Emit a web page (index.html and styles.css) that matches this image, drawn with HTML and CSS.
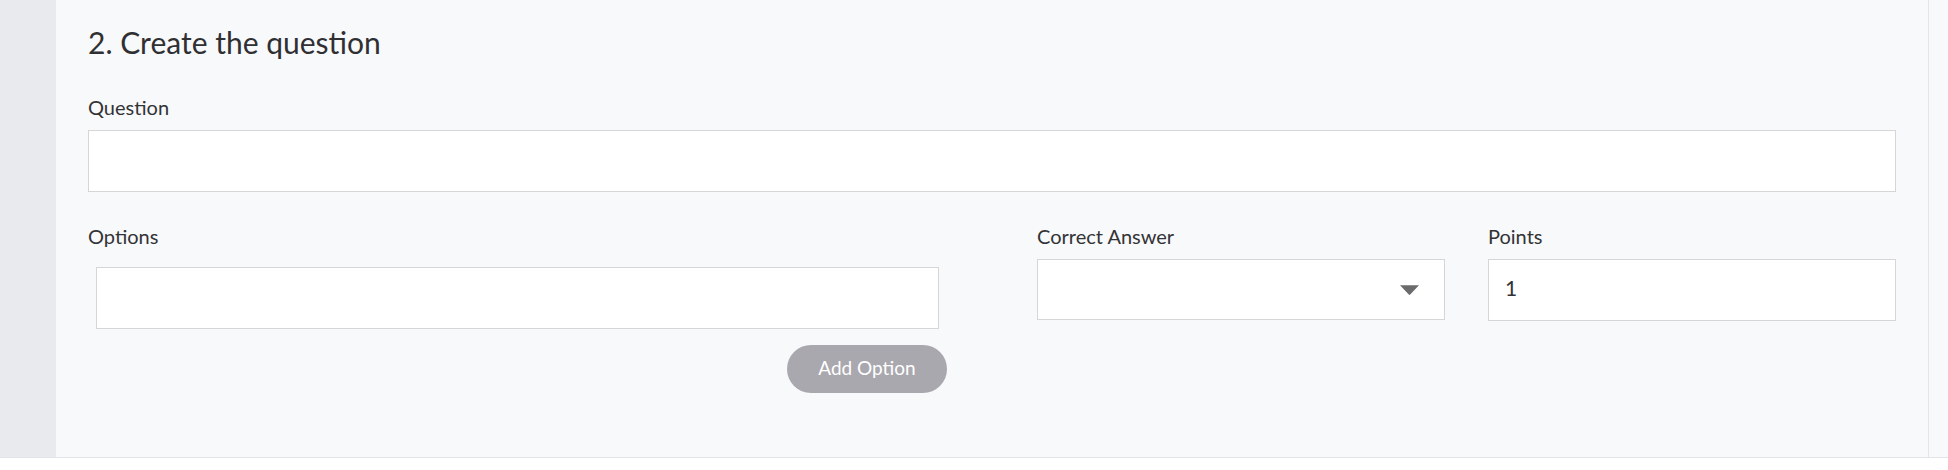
FILE: index.html
```html
<!DOCTYPE html>
<html>
<head>
<meta charset="utf-8">
<link rel="stylesheet" href="styles.css">
</head>
<body>
<div class="page">
  <aside class="sidebar"></aside>
  <main class="panel">
    <h2 class="title">2. Create the question</h2>
    <div class="field">
      <label class="label">Question</label>
      <div class="input input-question"></div>
    </div>
    <div class="row">
      <div class="col-options">
        <label class="label">Options</label>
        <div class="input input-option"></div>
        <div class="btn-row"><button class="btn-add">Add Option</button></div>
      </div>
      <div class="col-small">
        <label class="label">Correct Answer</label>
        <div class="input select">
          <svg class="caret" width="21" height="12" viewBox="0 0 21 12"><path d="M1 1.2 H20 L11.2 10.6 Q10.5 11.3 9.8 10.6 Z" fill="#6b6b6d"/></svg>
        </div>
      </div>
      <div class="col-small">
        <label class="label">Points</label>
        <div class="input points">1</div>
      </div>
    </div>
  </main>
  <div class="gutter"></div>
</div>
</body>
</html>
```
FILE: styles.css
```css
html, body {
  margin: 0;
  padding: 0;
  background: #ffffff;
}
body {
  font-family: Lato, "Open Sans", sans-serif;
  color: #333336;
}
.page {
  display: flex;
  height: 457px;
  border-bottom: 1px solid #e3e4e8;
  background: #f8f9fb;
}
.sidebar {
  width: 56px;
  flex: none;
  background: #e9eaee;
}
.panel {
  box-sizing: border-box;
  width: 1873px;
  flex: none;
  padding: 0 32px;
  border-right: 1px solid #e5e6ea;
  background: #f8f9fb;
}
.gutter {
  flex: 1;
  background: #f8f9fb;
}
.title {
  margin: 24px 0 0;
  font-size: 30px;
  line-height: 36px;
  font-weight: 400;
  color: #303033;
}
.field {
  margin-top: 35px;
}
.label {
  display: block;
  font-size: 20px;
  line-height: 24px;
  color: #333336;
}
.input {
  box-sizing: border-box;
  background: #ffffff;
  border: 1px solid #d6d6d9;
}
.input-question {
  margin-top: 11px;
  height: 62px;
}
.row {
  display: flex;
  margin-top: 32px;
}
.col-options {
  width: 859px;
  margin-right: 90px;
}
.input-option {
  margin: 19px 8px 0;
  height: 62px;
}
.btn-row {
  display: flex;
  justify-content: flex-end;
  margin-top: 16px;
}
.btn-add {
  width: 160px;
  height: 48px;
  border: none;
  border-radius: 24px;
  background: #a9a8ae;
  color: #ffffff;
  font-family: Lato, "Open Sans", sans-serif;
  font-size: 19px;
  padding: 0 0 4px;
}
.col-small {
  width: 408px;
}
.col-small + .col-small {
  margin-left: 43px;
}
.select {
  margin-top: 11px;
  height: 61px;
  display: flex;
  align-items: center;
  justify-content: flex-end;
  padding-right: 24px;
}
.caret {
  display: block;
}
.points {
  margin-top: 11px;
  height: 62px;
  display: flex;
  align-items: center;
  padding: 0 0 6px 16px;
  font-size: 21px;
  color: #333336;
}
```
